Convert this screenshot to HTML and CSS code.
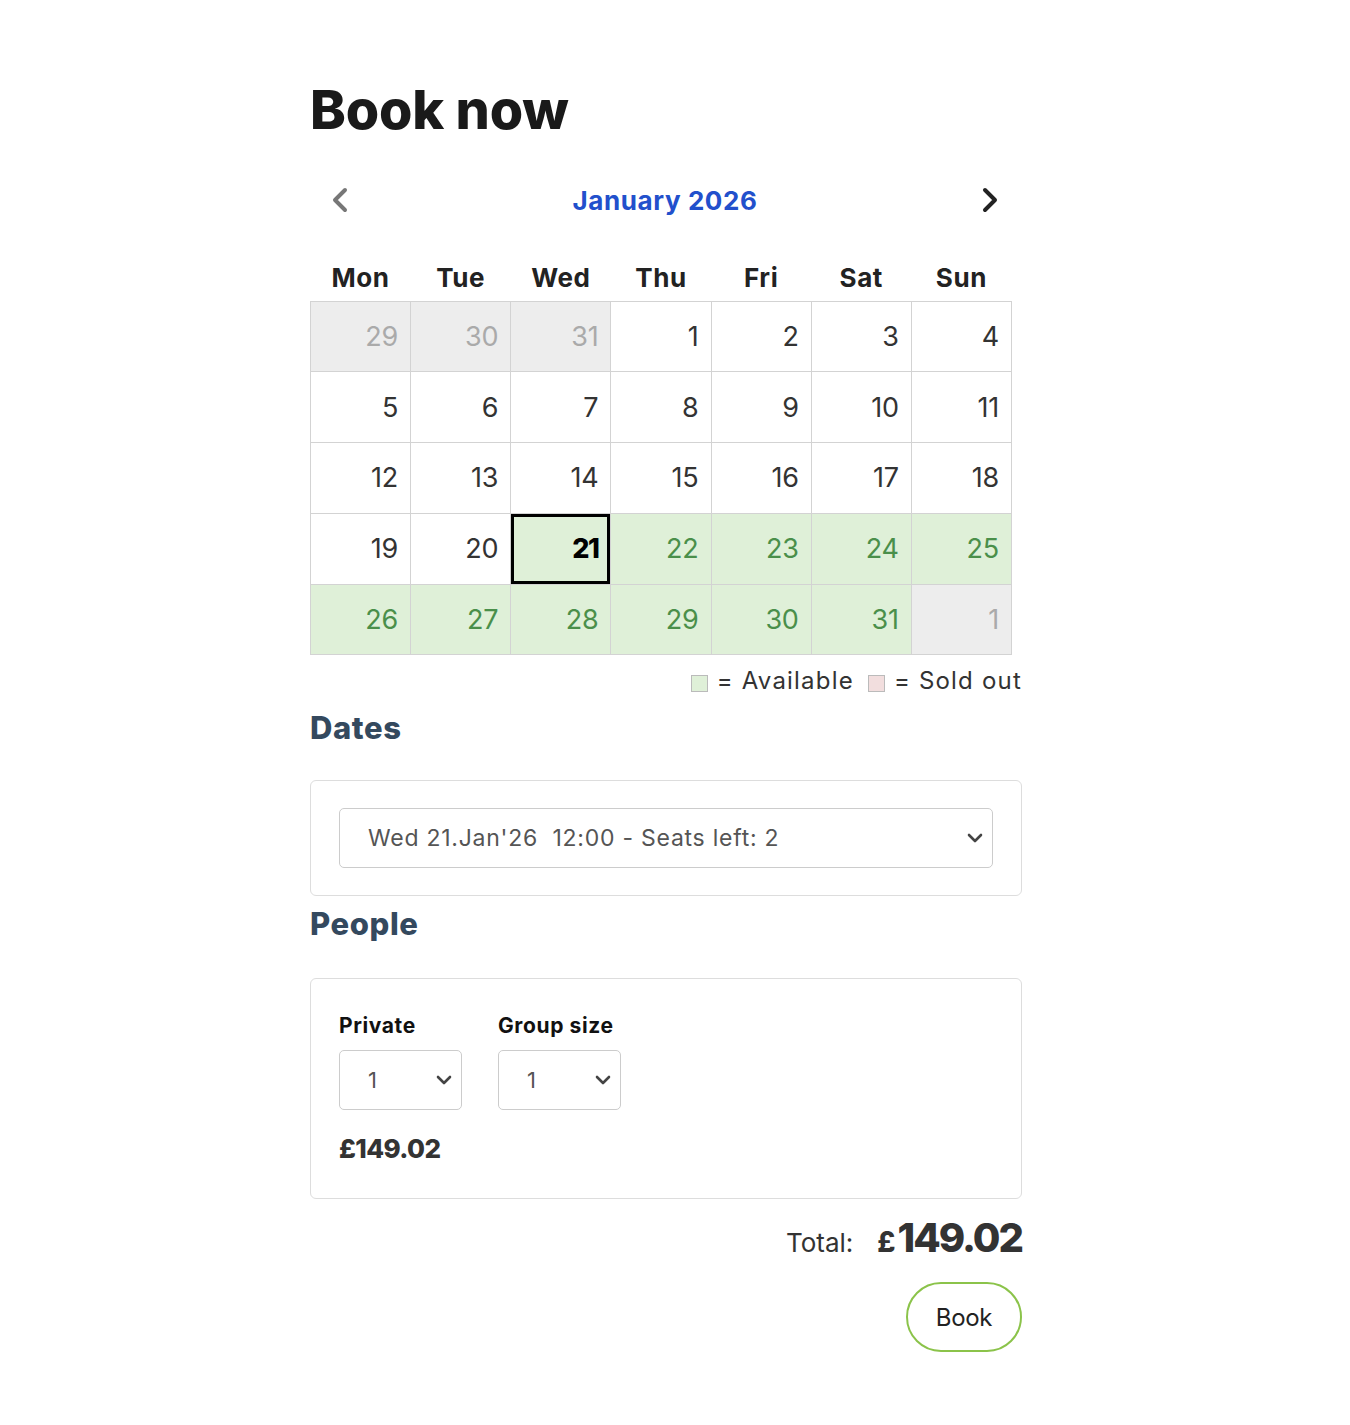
FILE: index.html
```html
<!DOCTYPE html>
<html lang="en">
<head>
<meta charset="utf-8">
<title>Book now</title>
<link rel="stylesheet" href="styles.css">
</head>
<body>
<main class="page">
  <h1 class="title">Book now</h1>

  <div class="month-nav">
    <span class="nav-btn prev">
      <svg width="20" height="28" viewBox="0 0 20 28"><path d="M15 4 L5 14 L15 24" fill="none" stroke="#777" stroke-width="4" stroke-linecap="round" stroke-linejoin="round"/></svg>
    </span>
    <span class="month">January 2026</span>
    <span class="nav-btn next">
      <svg width="20" height="28" viewBox="0 0 20 28"><path d="M5 4 L15 14 L5 24" fill="none" stroke="#222" stroke-width="4" stroke-linecap="round" stroke-linejoin="round"/></svg>
    </span>
  </div>

  <table class="cal">
    <thead>
      <tr><th>Mon</th><th>Tue</th><th>Wed</th><th>Thu</th><th>Fri</th><th>Sat</th><th>Sun</th></tr>
    </thead>
    <tbody>
      <tr><td class="other">29</td><td class="other">30</td><td class="other">31</td><td>1</td><td>2</td><td>3</td><td>4</td></tr>
      <tr><td>5</td><td>6</td><td>7</td><td>8</td><td>9</td><td>10</td><td>11</td></tr>
      <tr><td>12</td><td>13</td><td>14</td><td>15</td><td>16</td><td>17</td><td>18</td></tr>
      <tr><td>19</td><td>20</td><td class="avail selected">21</td><td class="avail">22</td><td class="avail">23</td><td class="avail">24</td><td class="avail">25</td></tr>
      <tr><td class="avail">26</td><td class="avail">27</td><td class="avail">28</td><td class="avail">29</td><td class="avail">30</td><td class="avail">31</td><td class="other">1</td></tr>
    </tbody>
  </table>

  <div class="legend">
    <span class="swatch sw-avail"></span><span class="legend-text">= Available</span>
    <span class="swatch sw-sold"></span><span class="legend-text">= Sold out</span>
  </div>

  <h2 class="section">Dates</h2>
  <div class="box dates-box">
    <div class="select wide">
      <span>Wed 21.Jan'26&nbsp; 12:00 - Seats left: 2</span>
      <svg width="18" height="12" viewBox="0 0 18 12"><path d="M3 3 L9 9 L15 3" fill="none" stroke="#444" stroke-width="2.6" stroke-linecap="round" stroke-linejoin="round"/></svg>
    </div>
  </div>

  <h2 class="section people-head">People</h2>
  <div class="box people-box">
    <div class="fields">
      <div class="field">
        <div class="label">Private</div>
        <div class="select small">
          <span>1</span>
          <svg width="18" height="12" viewBox="0 0 18 12"><path d="M3 3 L9 9 L15 3" fill="none" stroke="#444" stroke-width="2.6" stroke-linecap="round" stroke-linejoin="round"/></svg>
        </div>
      </div>
      <div class="field">
        <div class="label">Group size</div>
        <div class="select small">
          <span>1</span>
          <svg width="18" height="12" viewBox="0 0 18 12"><path d="M3 3 L9 9 L15 3" fill="none" stroke="#444" stroke-width="2.6" stroke-linecap="round" stroke-linejoin="round"/></svg>
        </div>
      </div>
    </div>
    <div class="price">£149.02</div>
  </div>

  <div class="total">
    <span class="total-label">Total:</span>
    <span class="total-amount"><span class="cur">£</span>149.02</span>
  </div>

  <div class="actions">
    <button class="book">Book</button>
  </div>
</main>
</body>
</html>
```

FILE: styles.css
```css
* { box-sizing: border-box; }

body {
  margin: 0;
  background: #fff;
  font-family: Inter, "Noto Sans", "DejaVu Sans", sans-serif;
  color: #333;
}

.page {
  width: 712px;
  margin-left: 310px;
  padding-top: 78px;
  padding-bottom: 60px;
}

.title {
  margin: 0;
  font-size: 54px;
  line-height: 64px;
  font-weight: 800;
  letter-spacing: -0.2px;
  color: #1a1a1a;
}

.month-nav {
  width: 702px;
  margin-top: 38px;
  height: 40px;
  display: flex;
  align-items: center;
  justify-content: space-between;
  padding: 0 12px 0 20px;
}

.nav-btn { display: flex; align-items: center; }

.month {
  font-size: 26px;
  font-weight: 700;
  color: #2250cc;
  letter-spacing: 0.6px;
}

.cal {
  margin-top: 35px;
  width: 702px;
  border-collapse: collapse;
  table-layout: fixed;
}

.cal th {
  font-size: 26px;
  font-weight: 700;
  color: #222;
  height: 46px;
  text-align: center;
  vertical-align: middle;
  padding: 0;
  letter-spacing: 0.6px;
}

.cal td {
  height: 70.8px;
  border: 1px solid #d3d3d3;
  text-align: right;
  vertical-align: middle;
  padding: 0 12px 0 0;
  font-size: 27px;
  color: #333;
  letter-spacing: -0.2px;
}

.cal td.other {
  background: #ededed;
  color: #aaa;
}

.cal td.avail {
  background: #dff0d8;
  color: #4a8f4a;
}

.cal td.selected {
  color: #000;
  font-weight: 800;
  box-shadow: inset 0 0 0 3px #000;
  letter-spacing: -1.5px;
}

.legend {
  display: flex;
  justify-content: flex-end;
  align-items: center;
  margin-top: 9px;
  font-size: 24px;
  color: #333;
  height: 32px;
  letter-spacing: 1.2px;
}

.swatch {
  width: 17px;
  height: 17px;
  border: 1px solid #bbb;
  margin-top: 6px;
  margin-right: 9px;
}

.sw-avail { background: #dff0d8; }
.sw-sold { background: #f2dede; margin-left: 14px; }

.section {
  margin: 12px 0 0;
  font-size: 31px;
  line-height: 40px;
  font-weight: 800;
  color: #34495e;
  letter-spacing: 0.6px;
}

.people-head { margin-top: 8px; }

.box {
  border: 1px solid #ddd;
  border-radius: 6px;
}

.dates-box {
  margin-top: 32px;
  padding: 27px 28px 27px 28px;
}

.select {
  border: 1px solid #ccc;
  border-radius: 5px;
  display: flex;
  align-items: center;
  justify-content: space-between;
  color: #555;
  background: #fff;
}

.select.wide {
  height: 60px;
  padding: 0 8px 0 28px;
  font-size: 23px;
  letter-spacing: 0.75px;
}

.people-box {
  margin-top: 34px;
  padding: 32px 28px 34px 28px;
}

.fields {
  display: flex;
  gap: 36px;
}

.label {
  font-size: 21px;
  font-weight: 700;
  color: #111;
  letter-spacing: 0.6px;
  line-height: 30px;
}

.select.small {
  width: 123px;
  height: 60px;
  margin-top: 9px;
  padding: 0 8px 0 28px;
  font-size: 22px;
}

.price {
  margin-top: 23px;
  font-size: 26px;
  font-weight: 800;
  color: #333;
  letter-spacing: -0.6px;
}

.total {
  display: flex;
  justify-content: flex-end;
  align-items: baseline;
  gap: 24px;
  margin-top: 14px;
}

.total-label {
  font-size: 26px;
  color: #333;
}

.total-amount {
  font-size: 40px;
  font-weight: 800;
  color: #333;
  letter-spacing: -2px;
}

.cur {
  font-size: 28px;
  margin-right: 4px;
}

.actions {
  display: flex;
  justify-content: flex-end;
  margin-top: 20px;
}

.book {
  width: 116px;
  height: 70px;
  border: 2px solid #8bc34a;
  border-radius: 35px;
  background: #fff;
  font-family: inherit;
  font-size: 24px;
  color: #222;
  letter-spacing: -0.3px;
  cursor: pointer;
}
```
